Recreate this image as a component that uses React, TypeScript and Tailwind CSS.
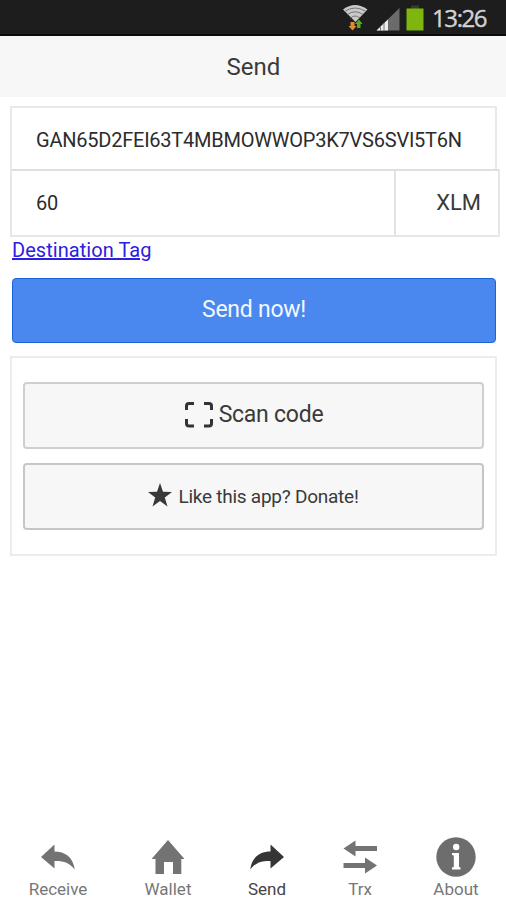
import React from "react";

const ReceiveIcon = () => (
  <svg className="shrink-0" width="36" height="40" viewBox="0 0 36 40" fill="#737373">
    <path d="M1 20 14.500 7.500v7C25 14.500 33 20 34.800 32.500 29 25.500 24 23.800 14.500 24v7.500Z" />
  </svg>
);

const WalletIcon = () => (
  <svg className="shrink-0" width="36" height="40" viewBox="0 0 36 40" fill="#737373">
    <path d="M18 3 34.500 22h-3.200v15H23V25h-9v12H5.500V22H1.500Z" />
  </svg>
);

const SendIcon = () => (
  <svg className="shrink-0" width="36" height="40" viewBox="0 0 36 40" fill="#353535">
    <path d="M35 20 21.500 7.500v7C11 14.500 3 20 1.200 32.500 7 25.500 12 23.800 21.500 24v7.500Z" />
  </svg>
);

const TrxIcon = () => (
  <svg className="shrink-0" width="36" height="40" viewBox="0 0 36 40" fill="#737373">
    <path d="M1.500 11.500 13.500 3.500V9H35v5H13.500v5.500ZM35 28.500 23 20.500V26H1.500v5H23v5.500Z" />
  </svg>
);

const AboutIcon = () => (
  <svg className="shrink-0" width="40" height="40" viewBox="0 0 40 40">
    <circle cx="20" cy="20" r="19.700" fill="#6d6d6d" />
    <circle cx="20.200" cy="10" r="3.200" fill="#fff" />
    <path d="M16 16h7v14l1.500.500V32.500h-8.500v-2l1.800-.5V18.500L16 18Z" fill="#fff" />
  </svg>
);

const tabs = [
  { label: "Receive", icon: <ReceiveIcon />, cell: "w-[116px]", text: "text-[#777]" },
  { label: "Wallet", icon: <WalletIcon />, cell: "w-[104px]", text: "text-[#777]" },
  { label: "Send", icon: <SendIcon />, cell: "w-[94px]", text: "text-[#444]" },
  { label: "Trx", icon: <TrxIcon />, cell: "w-[92px]", text: "text-[#777]" },
  { label: "About", icon: <AboutIcon />, cell: "w-[100px]", text: "text-[#777]" },
];

function StatusBar() {
  return (
    <div className="flex h-9 items-start justify-end border-b-2 border-[#0b0b0b] bg-[#1d1d1d]">
      <svg width="90" height="34" viewBox="340 0 90 34">
        <path d="M343 9.500Q355 .5 367.500 9.500L355.500 22Z" fill="#c9c9c9" />
        <g fill="none" stroke="#777" strokeWidth="1">
          <path d="M344.500 11.500Q355 4.500 366 11.500" />
          <path d="M347.500 14.500Q355 9 363 14.500" />
          <path d="M350.500 18Q355 14 360 18" />
        </g>
        <path d="M350.500 22h4v4h2l-4 4.500-4-4.500h2Z" fill="#e38b34" />
        <path d="M357 28v-4h-2l4-4.500 3.500 4.500h-2v4Z" fill="#5fa91f" />
        <path d="M376.500 30.500 399.500 8v22.500Z" fill="#6b6b6b" />
        <path d="M376.500 30.500 388 19.500v11Z" fill="#ededed" />
        <path d="M380.500 26v5M384 23v8" stroke="#777" />
        <path d="M411 5.500h8V9h-8Z" fill="#363c2c" />
        <path d="M406.500 8.500h17v22h-17Z" fill="#7fb60e" />
      </svg>
      <span className="w-[76px] pl-[2px] pt-[2px] font-['Open_Sans',sans-serif] text-[24px] leading-8 tracking-[-1.400px] text-[#d2d2d2] [-webkit-text-stroke:0.400px_#d2d2d2]">
        13:26
      </span>
    </div>
  );
}

export default function App() {
  return (
    <div className="flex h-[900px] w-[506px] flex-col bg-white font-['Roboto',sans-serif] text-[#3a3a3a]">
      <StatusBar />
      <header className="flex h-[61px] items-center justify-center bg-[#f7f7f7] pl-px text-2xl">
        Send
      </header>
      <main className="flex flex-1 flex-col pt-[9px]">
        <div className="ml-[10px] flex h-[63px] w-[487px] items-center border-2 border-b-0 border-[#e9e9e9] pl-6 pt-0.5 text-xl text-[#2c2c2c]">
          <span className="whitespace-nowrap tracking-[-0.230px]">GAN65D2FEI63T4MBMOWWOP3K7VS6SVI5T6N</span>
        </div>
        <div className="ml-[10px] flex h-[68px] w-[490px] border-2 border-t-[#dfdfdf] border-[#e7e7e7]">
          <div className="flex w-[384px] items-center border-r-2 border-[#e3e3e3] pl-6 text-xl tracking-[-0.300px] text-[#2c2c2c]">60</div>
          <div className="flex flex-1 items-center justify-end pb-0.5 pr-[17px] text-[22px]">XLM</div>
        </div>
        <a className="ml-3 h-[41px] self-start pt-px text-xl leading-6 tracking-[0.050px] text-[#2c20e0] underline">
          Destination Tag
        </a>
        <button className="ml-[12px] h-[65px] w-[484px] rounded-sm border border-[#1a65d8] bg-[#4a87ee] text-[23px] tracking-[-0.250px] text-[#f3f8ff]">
          Send now!
        </button>
        <section className="ml-[10px] mt-[13px] flex h-[200px] w-[487px] flex-col gap-[14px] border-2 border-[#ececec] px-[11px] pt-6">
          <button className="flex h-[67px] items-center justify-center rounded-sm border-2 border-[#cfcfcf] bg-[#f7f7f7] pb-px">
            <svg className="mr-[5px]" width="30" height="28" viewBox="0 0 30 28" fill="none" stroke="#333" strokeWidth="3">
              <path d="M2.500 9V5Q2.500 2.500 5 2.500H10M20 2.500h5Q27.500 2.500 27.500 5v4M2.500 18v4.500Q2.500 25 5 25h5M20 25h5q2.500 0 2.500-2.500V18" />
            </svg>
            <span className="pt-px text-[23px] tracking-[-0.250px]">Scan code</span>
          </button>
          <button className="flex h-[67px] items-center justify-center rounded-sm border-2 border-[#c6c6c6] bg-[#f7f7f7] pb-[3px]">
            <svg className="mr-[6px]" width="24" height="24" viewBox="0 0 24 24" fill="#393939">
              <path d="m12 0 3 8.800 9 .1-7.200 5.500L19.500 23.500 12 18l-7.500 5.500 2.700-9.100L0 8.900l9-.1Z" />
            </svg>
            <span className="pt-1 text-[19px] tracking-[-0.250px]">Like this app? Donate!</span>
          </button>
        </section>
      </main>
      <nav className="flex h-[63px]">
        {tabs.map((tab) => (
          <div key={tab.label} className={`flex flex-col items-center ${tab.cell}`}>
            {tab.icon}
            <span className={`pt-px text-[17px] leading-[22px] ${tab.text}`}>{tab.label}</span>
          </div>
        ))}
      </nav>
    </div>
  );
}
